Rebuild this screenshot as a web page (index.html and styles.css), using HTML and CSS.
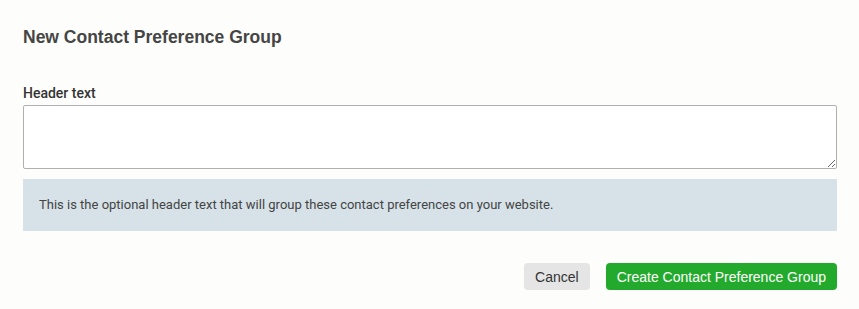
FILE: index.html
```html
<!DOCTYPE html>
<html lang="en">
<head>
    <meta charset="UTF-8">
    <title>New Contact Preference Group</title>
    <link rel="stylesheet" href="styles.css">
</head>
<body>
    <div class="dialog">
        <h1 class="dialog-title">New Contact Preference Group</h1>

        <div class="field">
            <label class="field-label" for="header-text">Header text</label>
            <textarea id="header-text" class="field-input"></textarea>
            <div class="field-help">
                This is the optional header text that will group these contact preferences on your website.
            </div>
        </div>

        <div class="dialog-actions">
            <button class="btn btn-cancel">Cancel</button>
            <button class="btn btn-primary">Create Contact Preference Group</button>
        </div>
    </div>
</body>
</html>
```

FILE: styles.css
```css
body {
    margin: 0;
    background: #fdfdfb;
    font-family: Roboto, "Liberation Sans", sans-serif;
    color: #333;
}
.dialog {
    padding: 26px 22px 0 23px;
}
.dialog-title {
    margin: 0;
    font-family: "Liberation Sans", Arial, sans-serif;
    font-size: 17.5px;
    font-weight: bold;
    line-height: 22px;
    color: #454545;
}
.field {
    margin-top: 37px;
}
.field-label {
    display: block;
    font-size: 14px;
    font-weight: 500;
    line-height: 17px;
    color: #333;
    margin-bottom: 3px;
}
.field-input {
    display: block;
    box-sizing: border-box;
    width: 100%;
    height: 64px;
    margin: 0;
    border: 1px solid #b0b0b0;
    border-radius: 2px;
    background: #fff;
    font-family: Roboto, sans-serif;
    font-size: 14px;
}
.field-help {
    margin-top: 10px;
    background: #d6e2e8;
    padding: 18px 16px;
    font-size: 13px;
    line-height: 16px;
    color: #444;
}
.dialog-actions {
    display: flex;
    justify-content: flex-end;
    gap: 16px;
    margin-top: 32px;
}
.btn {
    height: 27px;
    border: none;
    border-radius: 4px;
    padding: 0 11px;
    font-family: "Liberation Sans", Arial, sans-serif;
    font-size: 14px;
    cursor: pointer;
}
.btn-cancel {
    background: #e5e5e5;
    color: #333;
}
.btn-primary {
    background: #23aa2c;
    color: #fff;
}
```
